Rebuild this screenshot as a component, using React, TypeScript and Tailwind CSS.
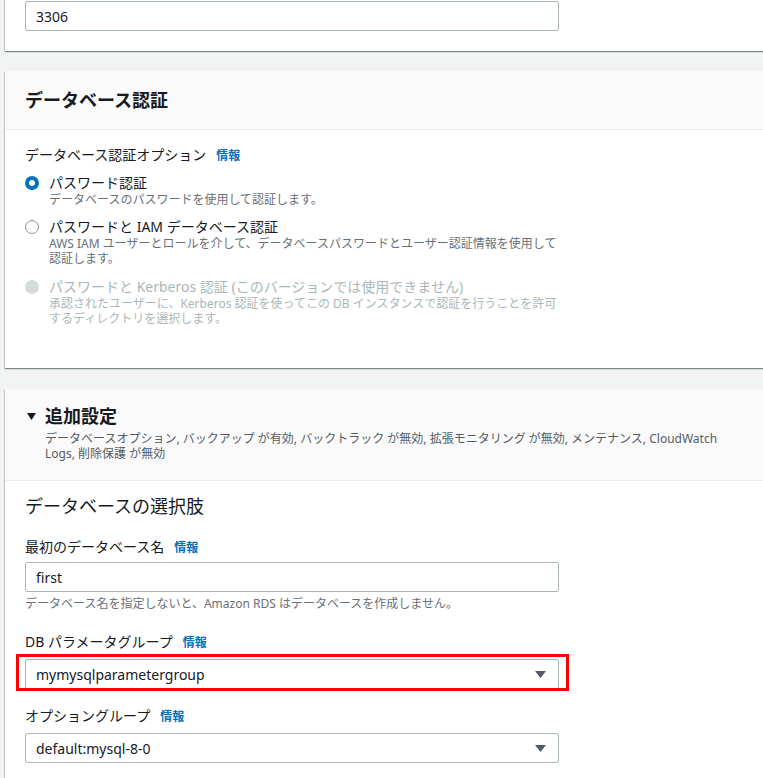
import React from 'react';

const FONT = "font-['Noto_Sans','Noto_Sans_CJK_JP',sans-serif]";

const Info: React.FC = () => (
  <span className="ml-[10px] text-[12px] font-bold text-[#0073bb]">情報</span>
);

const Card: React.FC<{ className?: string; children: React.ReactNode }> = ({ className = '', children }) => (
  <div
    className={`w-[800px] bg-white shadow-[0_1px_1px_0_rgba(0,28,36,0.3),1px_1px_1px_0_rgba(0,28,36,0.15),-1px_1px_1px_0_rgba(0,28,36,0.15)] ${className}`}
  >
    {children}
  </div>
);

const TextInput: React.FC<{ value: string }> = ({ value }) => (
  <div className="flex h-[30px] w-[534px] items-center rounded-[2px] border border-[#aab7b8] bg-white pl-[10px] text-[14px] text-[#16191f]">
    {value}
  </div>
);

const Select: React.FC<{ value: string }> = ({ value }) => (
  <div className="flex h-[30px] w-[534px] items-center justify-between rounded-[2px] border border-[#aab7b8] bg-white pl-[10px] pr-[12px] text-[14px] text-[#16191f]">
    <span>{value}</span>
    <svg width="11" height="7" viewBox="0 0 11 7">
      <path d="M0 0h11L5.5 7z" fill="#545b64" />
    </svg>
  </div>
);

const Radio: React.FC<{ state: 'on' | 'off' | 'disabled' }> = ({ state }) => {
  if (state === 'on')
    return <span className="mt-[2px] block h-[14px] w-[14px] shrink-0 rounded-full border-[4px] border-[#0073bb] bg-white" />;
  if (state === 'disabled')
    return <span className="mt-[2px] block h-[14px] w-[14px] shrink-0 rounded-full bg-[#d5dbdb]" />;
  return <span className="mt-[2px] block h-[14px] w-[14px] shrink-0 rounded-full border border-[#879596] bg-white" />;
};

const RadioOption: React.FC<{
  state: 'on' | 'off' | 'disabled';
  label: React.ReactNode;
  lines: string[];
  className?: string;
}> = ({ state, label, lines, className = '' }) => {
  const disabled = state === 'disabled';
  return (
    <div className={`flex gap-[10px] ${className}`}>
      <Radio state={state} />
      <div>
        <div className={`text-[14px] leading-[18px] ${disabled ? 'text-[#aab7b8]' : 'text-[#16191f]'}`}>{label}</div>
        {lines.map((l) => (
          <div key={l} className={`whitespace-nowrap text-[12px] leading-[15px] ${disabled ? 'text-[#aab7b8]' : 'text-[#687078]'}`}>
            {l}
          </div>
        ))}
      </div>
    </div>
  );
};

export default function App() {
  return (
    <div className={`h-[778px] w-full overflow-hidden bg-[#f2f3f3] px-[5px] ${FONT}`}>
      {/* port card (top cut off) */}
      <Card className="mt-[-19px] px-[20px] pb-[20px] pt-[20px]">
        <TextInput value="3306" />
      </Card>

      {/* database auth */}
      <Card className="mt-[20px]">
        <div className="border-b border-[#eaeded] bg-[#fafafa] px-[20px] py-[18px]">
          <h2 className="text-[18px] font-bold leading-[22px] text-[#16191f]">データベース認証</h2>
        </div>
        <div className="px-[20px] pb-[42px] pt-[15px]">
          <div className="text-[14px] leading-[20px] text-[#16191f]">
            データベース認証オプション
            <Info />
          </div>
          <RadioOption
            className="mt-[8px]"
            state="on"
            label="パスワード認証"
            lines={['データベースのパスワードを使用して認証します。']}
          />
          <RadioOption
            className="mt-[11px]"
            state="off"
            label="パスワードと IAM データベース認証"
            lines={['AWS IAM ユーザーとロールを介して、データベースパスワードとユーザー認証情報を使用して', '認証します。']}
          />
          <RadioOption
            className="mt-[12px]"
            state="disabled"
            label="パスワードと Kerberos 認証 (このバージョンでは使用できません)"
            lines={['承認されたユーザーに、Kerberos 認証を使ってこの DB インスタンスで認証を行うことを許可', 'するディレクトリを選択します。']}
          />
        </div>
      </Card>

      {/* additional settings */}
      <Card className="mt-[21px]">
        <div className="border-b border-[#eaeded] bg-[#fafafa] px-[20px] pb-[19px] pt-[16px]">
          <div className="flex items-center">
            <svg width="9" height="7" viewBox="0 0 9 7" className="ml-[2px] mr-[9px]">
              <path d="M0 0h9L4.5 7z" fill="#16191f" />
            </svg>
            <h2 className="text-[18px] font-bold leading-[22px] text-[#16191f]">追加設定</h2>
          </div>
          <div className="mt-[4px] pl-[20px] text-[12px] leading-[15px] text-[#545b64]">
            <div className="whitespace-nowrap">
              データベースオプション, バックアップ が有効, バックトラック が無効, 拡張モニタリング が無効, メンテナンス, CloudWatch
            </div>
            <div>Logs, 削除保護 が無効</div>
          </div>
        </div>
        <div className="px-[20px] pb-[20px] pt-[14px]">
          <h3 className="text-[18px] font-normal leading-[22px] text-[#16191f]">データベースの選択肢</h3>

          <div className="mt-[20px] text-[14px] leading-[20px] text-[#16191f]">
            最初のデータベース名
            <Info />
          </div>
          <div className="mt-[4px]">
            <TextInput value="first" />
          </div>
          <div className="mt-[4px] text-[12px] leading-[16px] text-[#687078]">
            データベース名を指定しないと、Amazon RDS はデータベースを作成しません。
          </div>

          <div className="mt-[20px] text-[14px] leading-[20px] text-[#16191f]">
            DB パラメータグループ
            <Info />
          </div>
          <div className="relative mt-[6px] w-[534px]">
            <Select value="mymysqlparametergroup" />
            <div className="pointer-events-none absolute bottom-[-2px] left-[-9px] right-[-10px] top-[-5px] border-[3px] border-[#ff0000]" />
          </div>

          <div className="mt-[17px] text-[14px] leading-[20px] text-[#16191f]">
            オプショングループ
            <Info />
          </div>
          <div className="mt-[6px]">
            <Select value="default:mysql-8-0" />
          </div>
        </div>
      </Card>
    </div>
  );
}
